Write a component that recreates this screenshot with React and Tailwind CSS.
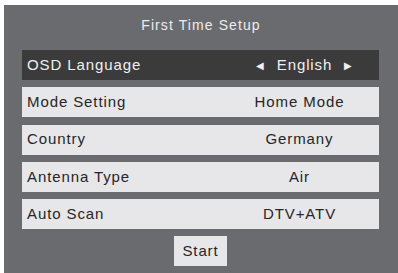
const rows = [
  { label: 'Mode Setting', value: 'Home Mode' },
  { label: 'Country', value: 'Germany' },
  { label: 'Antenna Type', value: 'Air' },
  { label: 'Auto Scan', value: 'DTV+ATV' },
];

export default function App() {
  return (
    <div className="w-[398px] h-[273px] bg-white pt-[5px] pl-[4px] overflow-hidden" style={{ fontFamily: '"Liberation Sans", Arial, sans-serif' }}>
      <div className="w-[394px] h-[268px] bg-[#6a6b6f] flex flex-col">
        <div className="h-[45px] pt-[11px] text-center text-[14px] leading-[18px] tracking-[1.1px] text-[#ececec]">
          First Time Setup
        </div>
        <div className="pl-[18px] flex flex-col gap-[7.25px]">
          <div className="w-[357px] h-[30px] bg-[#3b3b3c] flex items-center text-[15px] tracking-[0.9px] text-[#f0f0f0]">
            <div className="pl-[5px] w-[198px]">OSD Language</div>
            <div className="flex-1 flex items-center justify-center gap-[12px] pl-[10px]">
              <span className="text-[10px]">◀</span>
              <span>English</span>
              <span className="text-[10px]">▶</span>
            </div>
          </div>
          {rows.map((r) => (
            <div key={r.label} className="w-[357px] h-[30px] bg-[#e7e7e9] flex items-center text-[15px] tracking-[0.9px] text-[#262626]">
              <div className="pl-[5px] w-[198px]">{r.label}</div>
              <div className="flex-1 text-center">{r.value}</div>
            </div>
          ))}
          <div className="w-[357px] flex justify-center">
            <div className="w-[53px] h-[30px] bg-[#e7e7e9] flex items-center justify-center text-[15px] tracking-[0.9px] text-[#262626]">
              Start
            </div>
          </div>
        </div>
      </div>
    </div>
  );
}
